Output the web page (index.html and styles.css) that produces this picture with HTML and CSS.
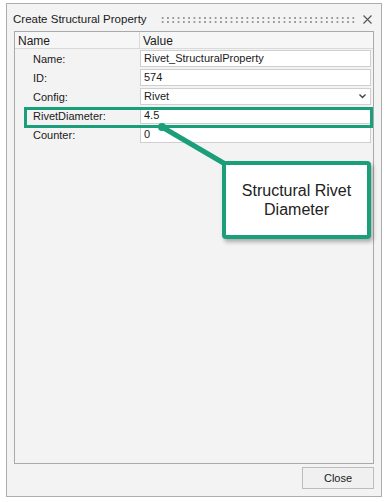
FILE: index.html
```html
<!DOCTYPE html>
<html lang="en">
<head>
  <meta charset="UTF-8" />
  <title>Create Structural Property</title>
  <link rel="stylesheet" href="styles.css">
</head>
<body>
  <div class="page">
    <div class="window">
      <div class="titlebar">
        <span class="title">Create Structural Property</span>
        <span class="grip"></span>
        <svg class="close-x" width="9" height="9" viewBox="0 0 9 9">
          <path d="M0.5 0.5 L8.5 8.5 M8.5 0.5 L0.5 8.5" stroke="#555" stroke-width="1.1" fill="none"/>
        </svg>
      </div>

      <div class="grid">
        <div class="grid-head">
          <div class="col-name">Name</div>
          <div class="col-value">Value</div>
        </div>
        <div class="grid-row">
          <div class="label">Name:</div>
          <div class="field">Rivet_StructuralProperty</div>
        </div>
        <div class="grid-row">
          <div class="label">ID:</div>
          <div class="field">574</div>
        </div>
        <div class="grid-row">
          <div class="label">Config:</div>
          <div class="field select">Rivet
            <svg class="chev" width="7" height="5" viewBox="0 0 7 5">
              <path d="M0.5 0.5 L3.5 3.5 L6.5 0.5" stroke="#444" stroke-width="1.4" fill="none"/>
            </svg>
          </div>
        </div>
        <div class="grid-row">
          <div class="label">RivetDiameter:</div>
          <div class="field">4.5</div>
        </div>
        <div class="grid-row">
          <div class="label">Counter:</div>
          <div class="field">0</div>
        </div>
      </div>

      <div class="footer">
        <button class="btn">Close</button>
      </div>
    </div>

    <!-- annotation overlay -->
    <div class="highlight"></div>
    <svg class="connector" width="389" height="502" viewBox="0 0 389 502">
      <line x1="162" y1="127" x2="232" y2="168" stroke="#1a9f7a" stroke-width="5" stroke-linecap="round"/>
      <circle cx="162" cy="127" r="4" fill="#1a9f7a"/>
    </svg>
    <div class="callout">Structural Rivet<br>Diameter</div>
  </div>
</body>
</html>
```

FILE: styles.css
```css
* {
  box-sizing: border-box;
  margin: 0;
  padding: 0;
}

html, body {
  height: 100%;
  background-color: #fff;
  font-family: 'Liberation Sans', Arial, sans-serif;
  font-size: 11px;
  color: #1a1a1a;
  overflow: hidden;
}

.page {
  position: relative;
  width: 389px;
  height: 502px;
  padding: 3px 7px 0 6px;
}

/* Dialog window */
.window {
  display: flex;
  flex-direction: column;
  width: 376px;
  height: 494px;
  background-color: #f3f3f3;
  border: 1px solid #adadad;
}

.titlebar {
  display: flex;
  align-items: center;
  height: 27px;
  padding: 3px 9px 0 6px;
}

.title {
  font-size: 11.5px;
  color: #1a1a1a;
  white-space: nowrap;
}

.grip {
  flex: 1;
  height: 7px;
  margin: 0 8px 0 13px;
  background-image: radial-gradient(circle, #9a9a9a 0.7px, transparent 1.1px);
  background-size: 5.3px 4px;
}

.close-x {
  display: block;
}

/* Property grid */
.grid {
  flex: 1;
  margin: 0 7px;
  border: 1px solid #a9a9a9;
  background-color: #f3f3f3;
}

.grid-head {
  display: flex;
  height: 17px;
  background-color: #f6f6f6;
  border-bottom: 1px solid #dadada;
  font-size: 12px;
}

.col-name {
  width: 125px;
  padding: 2px 0 0 3px;
  border-right: 1px solid #dadada;
}

.col-value {
  flex: 1;
  padding: 2px 0 0 3px;
}

.grid-row {
  display: flex;
  align-items: center;
  height: 19px;
}

.label {
  width: 125px;
  padding-left: 18px;
}

.field {
  position: relative;
  width: 231px;
  height: 17px;
  padding: 1px 0 0 3px;
  background-color: #fff;
  border: 1px solid #cfcfcf;
}

.chev {
  position: absolute;
  right: 4px;
  top: 5px;
}

/* Footer */
.footer {
  display: flex;
  justify-content: flex-end;
  padding: 3px 7px 7px 0;
}

.btn {
  width: 72px;
  height: 22px;
  font-family: 'Liberation Sans', Arial, sans-serif;
  font-size: 11px;
  color: #1a1a1a;
  background-color: #f0f0f0;
  border: 1px solid #bcbcbc;
}

/* Annotation */
.highlight {
  position: absolute;
  left: 24px;
  top: 107px;
  width: 349px;
  height: 21px;
  border: 3px solid #1a9f7a;
}

.connector {
  position: absolute;
  left: 0;
  top: 0;
}

.callout {
  position: absolute;
  left: 222px;
  top: 161px;
  width: 149px;
  height: 78px;
  display: flex;
  align-items: center;
  justify-content: center;
  text-align: center;
  font-size: 16px;
  line-height: 19px;
  color: #222;
  background-color: #fff;
  border: 4px solid #1a9f7a;
  border-radius: 4px;
  box-shadow: 2px 3px 4px rgba(0, 0, 0, 0.3);
}
```
